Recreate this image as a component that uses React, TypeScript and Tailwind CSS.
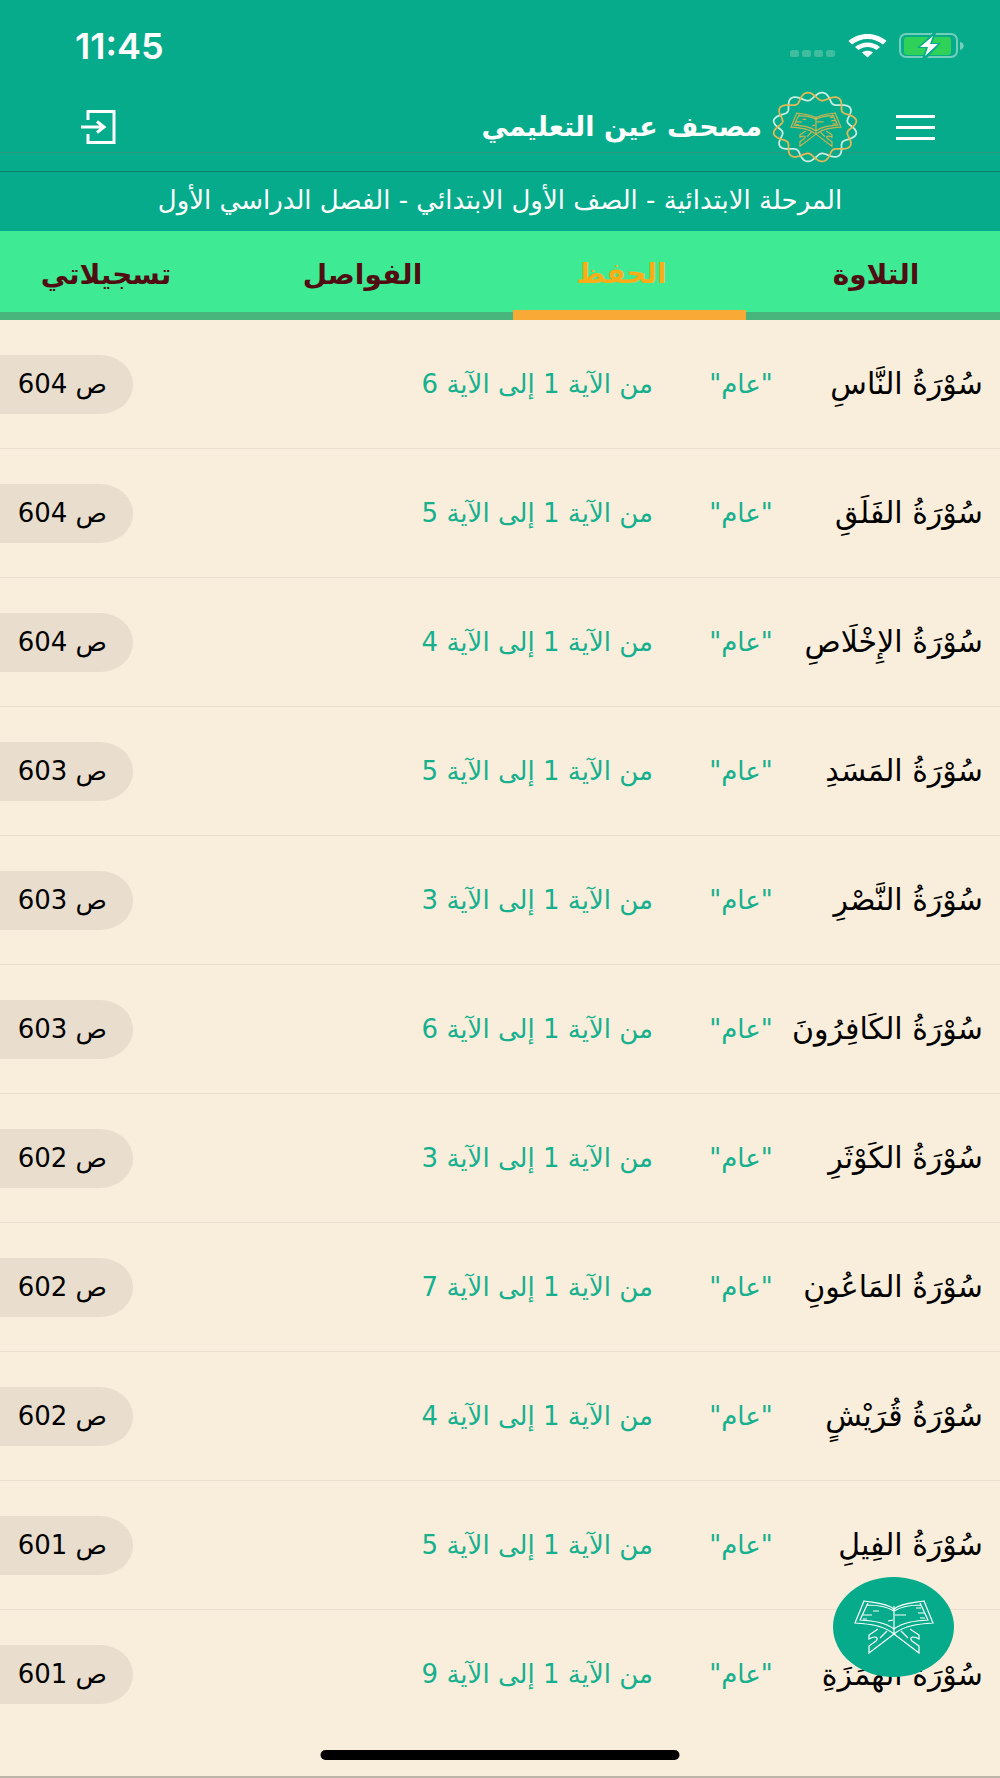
import clsx from "clsx";

interface ISurahItem {
  name: string;
  lastAyah: number;
  page: number;
}

const surahs: ISurahItem[] = [
  { name: "سُوْرَةُ النَّاسِ", lastAyah: 6, page: 604 },
  { name: "سُوْرَةُ الفَلَقِ", lastAyah: 5, page: 604 },
  { name: "سُوْرَةُ الإِخْلَاصِ", lastAyah: 4, page: 604 },
  { name: "سُوْرَةُ المَسَدِ", lastAyah: 5, page: 603 },
  { name: "سُوْرَةُ النَّصْرِ", lastAyah: 3, page: 603 },
  { name: "سُوْرَةُ الكَافِرُونَ", lastAyah: 6, page: 603 },
  { name: "سُوْرَةُ الكَوْثَرِ", lastAyah: 3, page: 602 },
  { name: "سُوْرَةُ المَاعُونِ", lastAyah: 7, page: 602 },
  { name: "سُوْرَةُ قُرَيْشٍ", lastAyah: 4, page: 602 },
  { name: "سُوْرَةُ الفِيلِ", lastAyah: 5, page: 601 },
  { name: "سُوْرَةُ الهُمَزَةِ", lastAyah: 9, page: 601 },
];

const tabs = [
  { title: "التلاوة", style: "pl-1.5" },
  { title: "الحفظ", style: "pr-4" },
  { title: "الفواصل", style: "" },
  { title: "تسجيلاتي", style: "" },
];

const activeTab = "الحفظ";

// one strand of the wreath around the logo
const strand = (sign: number) => {
  const points: string[] = [];
  for (let i = 0; i <= 240; i++) {
    const t = (i / 240) * Math.PI * 2;
    const wave = sign * Math.sin(8 * t);
    const x = 43 + (37.5 + 4.5 * wave) * Math.sin(t);
    const y = 36 - (31 + 4 * wave) * Math.cos(t);
    points.push(x.toFixed(1) + "," + y.toFixed(1));
  }
  return points.join(" ");
};

const BookPaths = () => (
  <>
    <path d="M39 8C31 2 20 2 9 0L0 22C14 23 28 24 39 33C50 24 64 23 78 22L69 0C58 2 47 2 39 8Z" />
    <path d="M13 2L5 19C18 20 30 21 39 28C48 21 60 20 73 19L65 2M39 5V33M39 10C31 5 22 4 12 4M39 10C47 5 56 4 66 4" />
    <path d="M8 14H17M18 10H24M8 18H12M33 20L38 19M40 14H51M63 12H70M61 7H66M65 17H70" />
    <path d="M39 33L14 52V45L21 40C24 37 21 34 14 38V34L23 28M39 33L64 52V45L57 40C54 37 57 34 64 38V34L55 28M32 30L25 37M46 30L53 37" />
  </>
);

const Logo = () => (
  <svg className="h-18 w-[86px] shrink-0" viewBox="0 0 86 72" fill="none" aria-hidden="true">
    <polyline points={strand(1)} stroke="#c9efe2" strokeWidth="1.8" />
    <polyline points={strand(-1)} stroke="#e3b955" strokeWidth="1.8" />
    <g transform="translate(19 22) scale(0.64)" stroke="#c9b552" strokeWidth="1.9">
      <BookPaths />
    </g>
  </svg>
);

const StatusBar = () => (
  <div dir="ltr" className="flex h-20 items-end justify-between pr-9 pb-3 pl-[75px] text-white">
    <span className="font-['Inter',sans-serif] text-[36px] leading-[44px] font-semibold">11:45</span>
    <div className="flex h-11 items-center gap-3">
      <svg className="mt-4 h-2 w-[46px]" viewBox="0 0 46 8" fill="#40bd9f">
        <rect width="9" height="7" rx="2.5" />
        <rect x="12" width="9" height="7" rx="2.5" />
        <rect x="24" width="9" height="7" rx="2.5" />
        <rect x="36" width="9" height="7" rx="2.5" />
      </svg>
      <svg className="h-6 w-[39px]" viewBox="0 0 39 24" fill="#fff">
        <path d="M0.500 7C11 -2.300 28 -2.300 38.500 7L35 10.500C26 3 13 3 4 10.500Z" />
        <path d="M7 13C14 7 25 7 32 13L28.500 16C23 12 16 12 10.500 16Z" />
        <path d="M14 18.500C17 16 22 16 25 18.500L19.500 23.500Z" />
      </svg>
      <svg className="h-[26px] w-[65px]" viewBox="0 0 65 26" fill="none">
        <rect x="1" y="1" width="57" height="23" rx="6" stroke="#74cfba" strokeWidth="2" />
        <rect x="5" y="4" width="47" height="18" rx="3" fill="#30d158" />
        <path d="M61 9C66 10 66 15 61 17Z" fill="#74cfba" />
        <path d="M34 0L18 15H27L23 26H27L42 10H33L37 0Z" fill="#05ab8a" />
        <path d="M34 3L21 14H29L26 23L39 11H31Z" fill="#fff" />
      </svg>
    </div>
  </div>
);

const App = () => {
  const list = surahs.map((surah) => (
    <li
      key={surah.name}
      className="flex h-[129px] items-center border-b border-[#e9dfd1] pr-[17px] last:border-0"
    >
      <a href="#surah" className="w-[170px] text-[30px] leading-[56px] whitespace-nowrap text-black">
        {surah.name}
      </a>
      <span className="w-36 text-center text-[26px] text-[#16b08f]">"عام"</span>
      <span className="mr-4 grow text-[26px] whitespace-nowrap text-[#16b08f]">
        من الآية 1 إلى الآية {surah.lastAyah}
      </span>
      <span className="flex h-[59px] w-[133px] items-center rounded-l-none rounded-r-[33px_29px] bg-[#e9dece] pr-[26px] text-[26px] whitespace-nowrap text-black">
        ص {surah.page}
      </span>
    </li>
  ));

  return (
    <div
      dir="rtl"
      className="relative min-h-screen overflow-hidden border-b-2 border-[#bdb6a8] bg-[#f9eedb] font-['DejaVu_Sans',sans-serif]"
    >
      <header className="bg-[#05ab8a] text-white">
        <StatusBar />
        <div className="flex h-[73px] items-center border-b border-[#2b9781] pt-[22px] pr-[65px] pl-20">
          <button aria-label="القائمة" className="flex w-[39px] flex-col gap-2">
            <span className="h-[3px] w-full bg-white" />
            <span className="h-[3px] w-full bg-white" />
            <span className="h-[3px] w-full bg-white" />
          </button>
          <div className="mr-[38px]">
            <Logo />
          </div>
          <h1 className="mr-2.5 grow text-[27px] font-bold">مصحف عين التعليمي</h1>
          <button aria-label="خروج">
            <svg className="h-9 w-9" viewBox="0 0 36 36" fill="none" stroke="#fff" strokeWidth="3">
              <path d="M8 11V2.500H34V33.500H8V25M1 18H24M17 12.500L24 18L17 23.500" />
            </svg>
          </button>
        </div>
        <div className="h-[19px] border-b border-[#098068]" />
        <p className="h-[59px] text-center text-[26px] leading-[56px]">
          المرحلة الابتدائية - الصف الأول الابتدائي - الفصل الدراسي الأول
        </p>
      </header>

      <nav className="grid h-[89px] grid-cols-[254fr_233fr_301fr_212fr] bg-[#3eea94]">
        {tabs.map((tab) => (
          <button
            key={tab.title}
            className={clsx(
              "pt-1.5 text-[28px] font-bold",
              tab.style,
              tab.title === activeTab
                ? "border-b-10 border-[#f8a936] text-[#faad17]"
                : "border-b-8 border-[#48b57d] text-[#500d12]"
            )}
          >
            {tab.title}
          </button>
        ))}
      </nav>

      <ul>{list}</ul>

      <button
        aria-label="المصحف"
        className="absolute right-[46px] bottom-[99px] flex h-[100px] w-[121px] items-center justify-center rounded-[50%] bg-[#05ab8a]"
      >
        <svg className="h-[54px] w-20" viewBox="-1 -1 80 54" fill="none" stroke="#fff" strokeWidth="1.200">
          <BookPaths />
        </svg>
      </button>
      <div className="absolute bottom-4 left-1/2 h-2.5 w-[359px] -translate-x-1/2 rounded-full bg-black" />
    </div>
  );
};
export default App;
